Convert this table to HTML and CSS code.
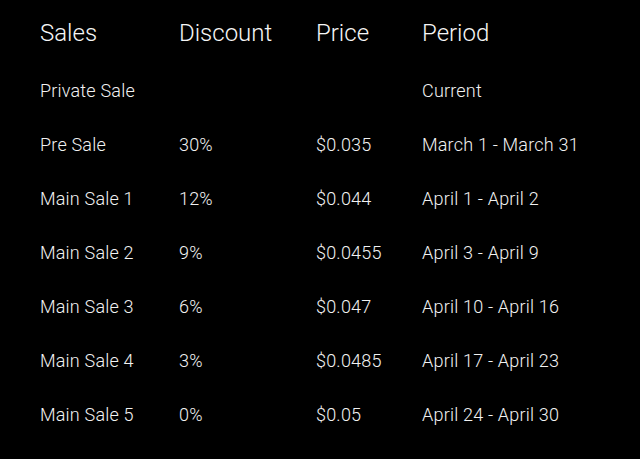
FILE: index.html
```html
<!DOCTYPE html>
<html>
<head>
<meta charset="utf-8">
<link rel="stylesheet" href="styles.css">
</head>
<body>
<div class="table">
  <div class="row head">
    <div>Sales</div><div>Discount</div><div>Price</div><div>Period</div>
  </div>
  <div class="rows">
    <div class="row"><div>Private Sale</div><div></div><div></div><div>Current</div></div>
    <div class="row"><div>Pre Sale</div><div>30%</div><div>$0.035</div><div>March 1 - March 31</div></div>
    <div class="row"><div>Main Sale 1</div><div>12%</div><div>$0.044</div><div>April 1 - April 2</div></div>
    <div class="row"><div>Main Sale 2</div><div>9%</div><div>$0.0455</div><div>April 3 - April 9</div></div>
    <div class="row"><div>Main Sale 3</div><div>6%</div><div>$0.047</div><div>April 10 - April 16</div></div>
    <div class="row"><div>Main Sale 4</div><div>3%</div><div>$0.0485</div><div>April 17 - April 23</div></div>
    <div class="row"><div>Main Sale 5</div><div>0%</div><div>$0.05</div><div>April 24 - April 30</div></div>
  </div>
</div>
</body>
</html>
```
FILE: styles.css
```css
html, body {
  margin: 0;
  background: #000;
  height: 100%;
}
body {
  font-family: Roboto, "Liberation Sans", sans-serif;
  color: #f2f2f2;
}
.table {
  padding: 19px 0 0 40px;
}
.row {
  display: grid;
  grid-template-columns: 139px 137px 106px 1fr;
  font-size: 18px;
  font-weight: 350;
  letter-spacing: 0.2px;
  line-height: 54px;
  white-space: nowrap;
}
.head {
  font-size: 24px;
  font-weight: 300;
  letter-spacing: 0;
  line-height: 28px;
  color: #f6f6f6;
}
.rows {
  margin-top: 17px;
}
```
